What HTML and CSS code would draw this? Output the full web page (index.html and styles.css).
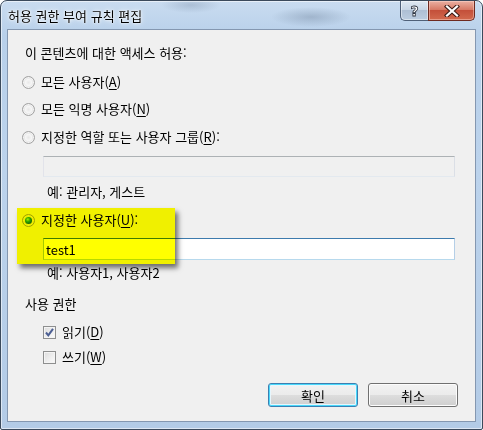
FILE: index.html
```html
<!DOCTYPE html>
<html lang="ko">
<head>
<meta charset="utf-8">
<title>허용 권한 부여 규칙 편집</title>
<link rel="stylesheet" href="styles.css">
</head>
<body>
<div class="window">
  <div class="titlebar">
    <span class="title">허용 권한 부여 규칙 편집</span>
    <div class="caption-btns">
      <div class="cap help"><span class="q">?</span></div>
      <div class="cap close">
        <svg width="16" height="12" viewBox="0 0 16 12"><path d="M3 1.5 L13 10.5 M13 1.5 L3 10.5" stroke="#3a1a14" stroke-width="4.2" stroke-linecap="square" fill="none"/><path d="M3 1.5 L13 10.5 M13 1.5 L3 10.5" stroke="#ffffff" stroke-width="2.2" stroke-linecap="square" fill="none"/></svg>
      </div>
    </div>
  </div>
  <div class="client">
    <div class="line heading">이 콘텐츠에 대한 액세스 허용:</div>
    <div class="line opt r1"><span class="radio"></span>모든 사용자(<u>A</u>)</div>
    <div class="line opt r2"><span class="radio"></span>모든 익명 사용자(<u>N</u>)</div>
    <div class="line opt r3"><span class="radio"></span>지정한 역할 또는 사용자 그룹(<u>R</u>):</div>
    <div class="field disabled f1"></div>
    <div class="line hint h1">예: 관리자, 게스트</div>
    <div class="line opt r4"><span class="radio on"></span>지정한 사용자(<u>U</u>):</div>
    <div class="field focus f2">test1</div>
    <div class="line hint h2">예: 사용자1, 사용자2</div>
    <div class="line heading section">사용 권한</div>
    <div class="line check c1"><span class="box"><svg width="11" height="11" viewBox="0 0 11 11"><path d="M2 5.5 L4.3 8.3 L9 1.8" stroke="#4c5f93" stroke-width="2" fill="none"/></svg></span>읽기(<u>D</u>)</div>
    <div class="line check c2"><span class="box"></span>쓰기(<u>W</u>)</div>
    <div class="buttons">
      <div class="btn default">확인</div>
      <div class="btn">취소</div>
    </div>
  </div>
  <div class="highlight"></div>
</div>
</body>
</html>
```
FILE: styles.css
```css
* { box-sizing: border-box; }
html, body { margin: 0; padding: 0; }
body {
  width: 483px;
  height: 430px;
  font-family: "Noto Sans CJK KR", "Noto Sans", sans-serif;
  font-size: 13px;
  color: #000;
  background: #fff;
}
.window {
  position: relative;
  width: 483px;
  height: 430px;
  border: 1px solid #3b4a5c;
  border-radius: 7px 7px 2px 2px;
  padding: 0 6px 7px 6px;
  display: flex;
  flex-direction: column;
  background:
    radial-gradient(ellipse 40px 10px at 310px 16px, rgba(120,140,165,0.45), rgba(120,140,165,0) 100%),
    radial-gradient(ellipse 30px 8px at 190px 4px, rgba(120,140,165,0.35), rgba(120,140,165,0) 100%),
    linear-gradient(180deg, #c9dcf0 0%, #b8d0ea 8%, #bcd3ec 40%, #b3cbe6 100%);
  box-shadow: inset 0 0 0 1px rgba(255,255,255,0.55);
}
.titlebar {
  height: 28px;
  display: flex;
  align-items: flex-start;
  padding: 0 1px 0 1px;
}
.title {
  padding-top: 5px;
  line-height: 20px;
  font-size: 13px;
  text-shadow: 0 0 6px #fff, 0 0 3px #fff, 0 0 1px #fff;
}
.caption-btns {
  margin-left: auto;
  display: flex;
  height: 20px;
}
.cap {
  height: 20px;
  display: flex;
  align-items: center;
  justify-content: center;
  border: 1px solid #4f6078;
  border-top: none;
}
.help {
  width: 28px;
  border-right: none;
  border-radius: 0 0 0 5px;
  background: linear-gradient(180deg, #dfe8f2 0%, #c9d6e5 45%, #aebfd4 50%, #bccde0 100%);
  box-shadow: inset 0 0 0 1px rgba(255,255,255,0.45);
}
.help .q {
  font-family: "DejaVu Sans", sans-serif;
  font-weight: bold;
  font-size: 14px;
  line-height: 14px;
  color: #fff;
  -webkit-text-stroke: 0.8px #2d3340;
  margin-top: 1px;
}
.close {
  width: 47px;
  border-color: #6e2a20;
  border-radius: 0 0 5px 0;
  background: linear-gradient(180deg, #eab0a2 0%, #d77a66 45%, #c4503a 50%, #d26a4e 100%);
  box-shadow: inset 0 0 0 1px rgba(255,220,210,0.45);
}
.close svg { display: block; }
.client {
  flex: 1;
  background: #f0f0f0;
  border: 1px solid #8497b0;
  padding: 11px 17px 0 0;
  display: flex;
  flex-direction: column;
}
.line {
  height: 24px;
  line-height: 24px;
  display: flex;
  align-items: center;
  white-space: nowrap;
}
.line u { text-decoration-thickness: 1px; text-underline-offset: 2px; }
.heading { margin-left: 17px; }
.opt { margin-left: 14px; }
.r1 { margin-top: 5px; }
.r2 { margin-top: 3px; }
.r3 { margin-top: 4px; }
.r4 { margin-top: 4px; }
.radio {
  width: 13px;
  height: 13px;
  border-radius: 50%;
  margin-right: 6px;
  flex: none;
  border: 1px solid #a2a2a2;
  background: radial-gradient(circle at 50% 50%, #e8e8e8 0%, #f6f6f6 40%, #dadada 70%, #cfcfcf 100%);
  box-shadow: inset 0 0 0 1px #f4f4f4;
  display: flex;
  align-items: center;
  justify-content: center;
}
.radio.on::after {
  content: "";
  width: 7px;
  height: 7px;
  border-radius: 50%;
  background: radial-gradient(circle at 40% 35%, #a8f0ff 0%, #2ea8d8 35%, #17649a 75%, #0f4266 100%);
}
.field {
  margin-left: 35px;
  width: 412px;
  padding-left: 2px;
  font-size: 13px;
  display: flex;
  align-items: center;
}
.f1 {
  margin-top: 7px;
  height: 21px;
  background: #f0f0f0;
  border: 1px solid;
  border-color: #adb2b5 #dbdfe6 #e3e9ef #e2e3ea;
}
.f2 {
  margin-top: 6px;
  height: 22px;
  background: #fff;
  border: 1px solid;
  border-color: #3d7bad #b5cfe7 #b7d9ed #a4c9e3;
}
.hint { margin-left: 39px; }
.h1 { margin-top: 3px; }
.h2 { margin-top: 1px; }
.section { margin-top: 7px; }
.check { margin-left: 35px; }
.c1 { margin-top: 4px; }
.c2 { margin-top: 1px; }
.box {
  width: 13px;
  height: 13px;
  margin-right: 6px;
  flex: none;
  border: 1px solid #8e8f8f;
  background: linear-gradient(135deg, #dcdcdc 0%, #f0f0f0 60%, #fbfbfb 100%);
  box-shadow: inset 0 0 0 1px #f4f4f4;
  display: flex;
  align-items: center;
  justify-content: center;
}
.box svg { display: block; }
.buttons {
  margin-top: 14px;
  display: flex;
  justify-content: flex-end;
  gap: 10px;
}
.btn {
  width: 90px;
  height: 24px;
  border: 1px solid #707070;
  border-radius: 3px;
  display: flex;
  align-items: center;
  justify-content: center;
  background: linear-gradient(180deg, #f2f2f2 0%, #ebebeb 50%, #dddddd 51%, #cfcfcf 100%);
  box-shadow: inset 0 0 0 1px #fcfcfc;
}
.btn.default {
  border-color: #3c7fb1;
  box-shadow: inset 0 0 0 1px #48d8fb, inset 0 0 0 2px #e6f6fd;
}
.highlight {
  position: absolute;
  left: 16px;
  top: 207px;
  width: 158px;
  height: 56px;
  background: #ffff00;
  mix-blend-mode: multiply;
  box-shadow: 3px 4px 5px rgba(0,0,0,0.55);
}
```
